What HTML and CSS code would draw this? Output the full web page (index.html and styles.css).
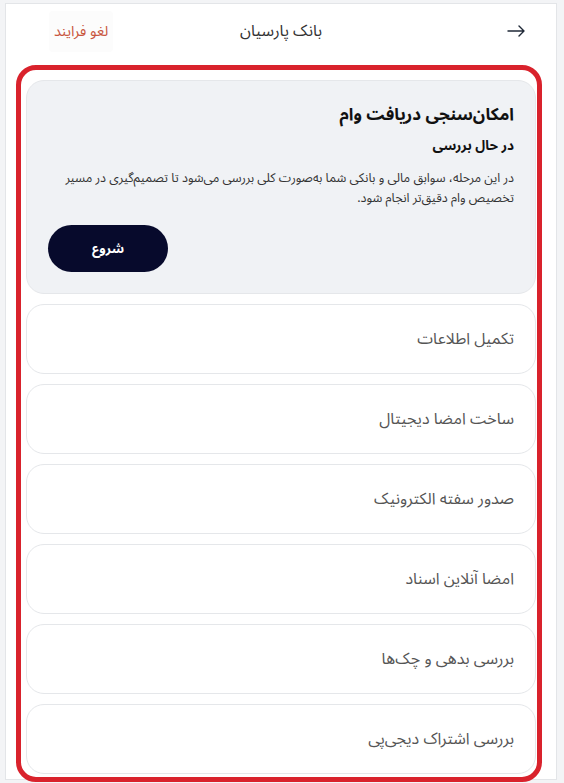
FILE: index.html
```html
<!DOCTYPE html>
<html lang="fa" dir="rtl">
<head>
<meta charset="utf-8">
<title>بانک پارسیان</title>
<link rel="stylesheet" href="styles.css">
</head>
<body>
<div class="panel">
  <header class="topbar">
    <button class="back" aria-label="بازگشت">
      <svg width="18" height="12" viewBox="0 0 18 12" fill="none" stroke="#1f2937" stroke-width="1.4" stroke-linecap="round" stroke-linejoin="round"><path d="M1 6H17M12 1L17 6L12 11"/></svg>
    </button>
    <div class="bank">بانک پارسیان</div>
    <button class="cancel">لغو فرایند</button>
  </header>
  <main class="content">
    <section class="card active">
      <h1 class="title">امکان‌سنجی دریافت وام</h1>
      <div class="status">در حال بررسی</div>
      <p class="desc">در این مرحله، سوابق مالی و بانکی شما به‌صورت کلی بررسی می‌شود تا تصمیم‌گیری در مسیر تخصیص وام دقیق‌تر انجام شود.</p>
      <button class="start">شروع</button>
    </section>
    <div class="card step">تکمیل اطلاعات</div>
    <div class="card step">ساخت امضا دیجیتال</div>
    <div class="card step">صدور سفته الکترونیک</div>
    <div class="card step">امضا آنلاین اسناد</div>
    <div class="card step">بررسی بدهی و چک‌ها</div>
    <div class="card step">بررسی اشتراک دیجی‌پی</div>
  </main>
  <div class="highlight"></div>
</div>
</body>
</html>
```
FILE: styles.css
```css
* { box-sizing: border-box; }
html, body { margin: 0; padding: 0; }
body {
  background: #f3f4f6;
  font-family: "Noto Sans Arabic", "Vazirmatn", "DejaVu Sans", "Noto Sans", sans-serif;
  color: #222;
  height: 783px;
  overflow: hidden;
}
.panel {
  position: relative;
  margin: 3px auto 0 5px;
  width: 552px;
  height: 777px;
  background: #fff;
  border: 1px solid #e3e5e8;
}
.topbar {
  height: 54px;
  display: flex;
  align-items: center;
  justify-content: space-between;
  padding: 0 31px 0 43px;
  position: relative;
}
.back {
  background: none;
  border: 0;
  padding: 0;
  display: flex;
  width: 18px;
  height: 12px;
}
.bank {
  position: absolute;
  left: 0;
  right: 0;
  text-align: center;
  font-size: 16px;
  color: #333;
  pointer-events: none;
}
.cancel {
  font-family: inherit;
  background: #fcfcfc;
  border: 0;
  border-radius: 4px;
  color: #c8563f;
  font-size: 14.5px;
  padding: 5px 5px;
}
.content {
  padding: 22px 20px 0;
  display: flex;
  flex-direction: column;
  gap: 10px;
}
.card {
  border: 1px solid #e5e7ea;
  border-radius: 18px;
}
.active {
  background: #f0f2f5;
  padding: 19px 21px 20px;
  height: 214px;
}
.title {
  margin: 0;
  font-size: 17px;
  line-height: 30px;
  font-weight: 700;
  color: #111;
}
.status {
  margin-top: 4px;
  font-size: 13.5px;
  line-height: 24px;
  font-weight: 700;
  color: #111;
}
.desc {
  margin: 10px 0 0;
  font-size: 12.5px;
  line-height: 20px;
  color: #333;
}
.start {
  display: block;
  margin: 17px auto 0 0;
  width: 120px;
  height: 47px;
  border: 0;
  border-radius: 24px;
  background: #070a2c;
  color: #fff;
  font-family: inherit;
  font-size: 13px;
  font-weight: 700;
}
.step {
  height: 70px;
  display: flex;
  align-items: center;
  padding: 0 21px;
  font-size: 16px;
  color: #555;
  background: #fff;
}
.highlight {
  position: absolute;
  left: 10px;
  top: 61px;
  width: 526px;
  height: 717px;
  border: 5px solid #d9222c;
  border-radius: 20px;
  pointer-events: none;
}
```
